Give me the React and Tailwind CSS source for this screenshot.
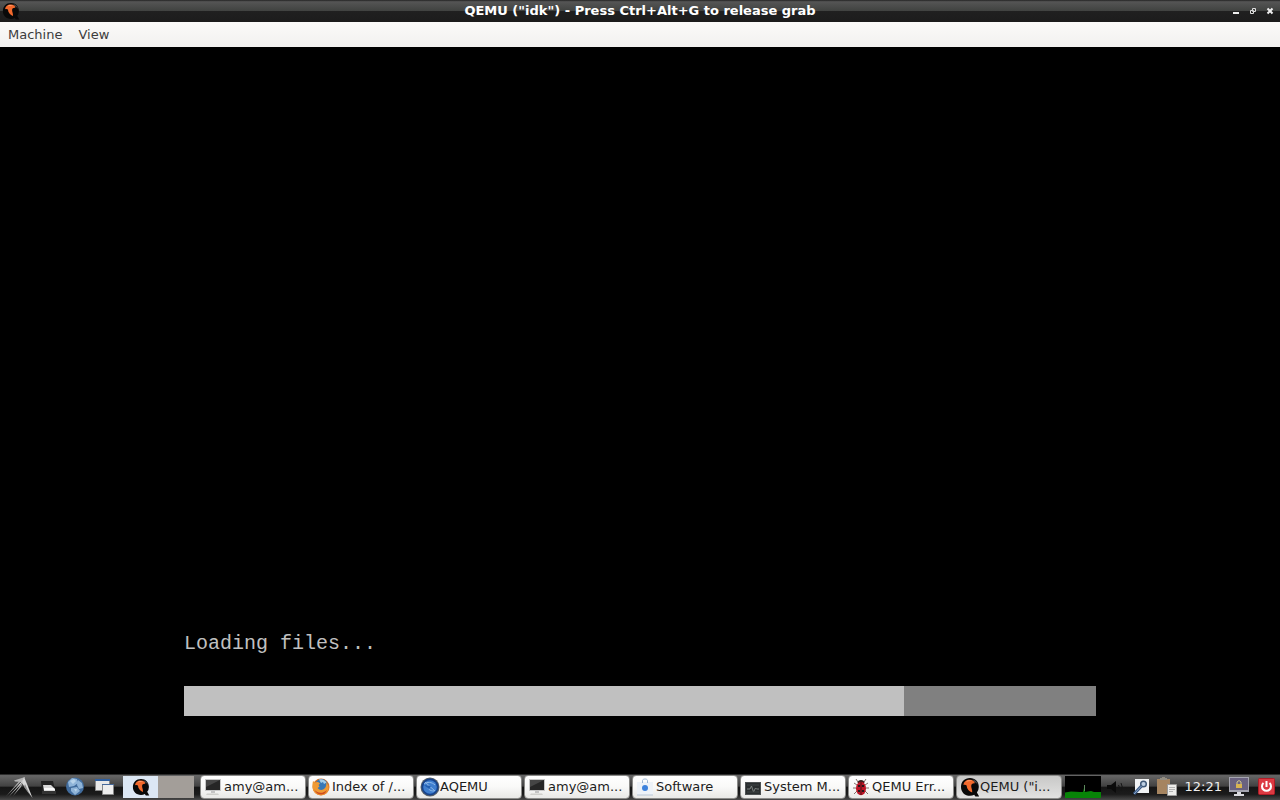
import React from "react";

function QemuIcon({ className }) {
  return (
    <svg viewBox="0 0 20 20" className={className} aria-hidden="true">
      <path d="M10 1C4.600 1 1 4.700 1 10s3.800 8.800 9 8.800c1.600 0 3-.3 4.200-1l1.200 1.700h3.800l-2.300-4.100A9 9 0 0 0 18.800 10C18.800 4.700 15.200 1 10 1z" fill="#090909" />
      <path d="M12.500 2.300c3 .7 4.800 3 5.200 5.600-1-1.700-2-2.500-3.300-2.900z" fill="#4c4c4c" />
      <path d="M3.500 8C3.600 4.600 6.600 2.500 10 2.700c3 .2 4.800 1.600 4.800 3.700-2.200-.2-3.500.6-3.600 2.600 0 2.300 1.300 3.800 1 6.500-3-1.100-5.400-3.700-5.600-7.100C5.700 7.600 4.700 7.400 3.500 8z" fill="#f2692c" />
      <path d="M6 4.800c1.800-1.700 4.600-1.900 6.500-.6-2-.2-4-.1-6.500.6z" fill="#ffa071" />
    </svg>
  );
}

function TerminalIcon() {
  return (
    <svg viewBox="0 0 18 18" className="size-[18px] shrink-0" aria-hidden="true">
      <rect x="1" y="1" width="16" height="12" fill="#c8c8c8" />
      <rect x="2" y="2" width="14" height="10" fill="#262626" />
      <path d="M2 2h14L2 9z" fill="#454545" />
      <path d="M7 13h4v2H7z" fill="#c4c4c4" />
      <path d="M3 15.500h11l1 1.500H2z" fill="#cfcfcb" />
    </svg>
  );
}

function FirefoxIcon() {
  return (
    <svg viewBox="0 0 18 18" className="size-[18px] shrink-0" aria-hidden="true">
      <circle cx="9" cy="9" r="8.500" fill="#de7424" />
      <circle cx="9.500" cy="7.500" r="6.500" fill="#3878b6" />
      <path d="M7 1.500c3-1 6 .3 7.500 3L12 6l-1-2-2 1z" fill="#a6cee8" />
      <path d="M1 3l2 1.500C5 3.500 7 4 8 5.500L6.500 7l1 1.500L5.700 10c1.500 2.500 5 2.500 7 .3 1.500-1.500 1.800-4 1.300-6 2.300 2 3.600 5.500 1.800 9-3 5-10.300 5.600-14 0C.2 10.500.2 6 1 3z" fill="#ef9a34" />
      <path d="M2 11c3 4.800 9 5 13 1-2 6-10 6.500-13-1z" fill="#cf4c20" />
    </svg>
  );
}

function AqemuIcon() {
  return (
    <svg viewBox="0 0 20 20" className="size-5 shrink-0" aria-hidden="true">
      <circle cx="10" cy="10" r="9.500" fill="#56606a" />
      <circle cx="10" cy="10" r="8.500" fill="#16438d" />
      <circle cx="10" cy="10" r="6.800" fill="#3f7fcf" />
      <path d="M4 7c3-2.500 8-2 11 1M5 5l10 9M8 8c-1 4 2 6 6 6" fill="none" stroke="#8fb9e8" strokeWidth="1" />
      <path d="M4 8l7 1-2 3z" fill="#225eb0" />
    </svg>
  );
}

function SoftwareIcon() {
  return (
    <svg viewBox="0 0 18 18" className="size-[18px] shrink-0" aria-hidden="true">
      <path d="M1 4h16v13H1z" fill="#edf2f8" />
      <path d="M1 17h16" stroke="#b8c6d5" />
      <path d="M6.500 5V2.500c0-2 5-2 5 0V5" fill="none" stroke="#9db7d4" />
      <circle cx="9" cy="10" r="3" fill="#3d82dc" />
    </svg>
  );
}

function MonitorIcon() {
  return (
    <svg viewBox="0 0 18 18" className="size-[18px] shrink-0" aria-hidden="true">
      <rect x="1.500" y="4.500" width="15" height="12" fill="#292d2e" stroke="#4d5152" />
      <path d="M3 11h3l1.500-3 2 6 2-4 1 1H15" fill="none" stroke="#7d8381" />
      <path d="M3 7h12M3 14h12" stroke="#3f4545" />
    </svg>
  );
}

function BugIcon() {
  return (
    <svg viewBox="0 0 18 18" className="size-[18px] shrink-0" aria-hidden="true">
      <path d="M6 4L4 1M12 4l2-3M5 7L2 5M13 7l3-2M4 10H1M14 10h3M5 13l-3 3M13 13l3 3" stroke="#80706a" />
      <path d="M5.500 5c0-4 7-4 7 0z" fill="#38201e" />
      <ellipse cx="9" cy="10.500" rx="5" ry="6.700" fill="#bd1526" />
      <path d="M9 4v13" stroke="#4d1015" />
      <path d="M6 7h2v2H6zM10 7h2v2h-2zM6 12h2v2H6zM10 12h2v2h-2z" fill="#25171a" />
    </svg>
  );
}

const tasks = [
  { label: "amy@am...", icon: <TerminalIcon /> },
  { label: "Index of /...", icon: <FirefoxIcon /> },
  { label: "AQEMU", icon: <AqemuIcon />, wide: true },
  { label: "amy@am...", icon: <TerminalIcon /> },
  { label: "Software", icon: <SoftwareIcon /> },
  { label: "System M...", icon: <MonitorIcon /> },
  { label: "QEMU Err...", icon: <BugIcon /> },
  { label: "QEMU (\"i...", icon: <QemuIcon className="size-5 shrink-0" />, wide: true, active: true },
];

function Task({ label, icon, wide, active }) {
  return (
    <button
      type="button"
      aria-pressed={!!active}
      className={
        "flex h-6 max-w-[106px] min-w-0 flex-1 items-center overflow-hidden rounded-[4px] border border-[#8b8b89] pl-[3px] text-left text-[13px] whitespace-nowrap text-[#1c1c1c] " +
        (wide ? "gap-0 " : "gap-[2px] ") +
        (active
          ? "bg-linear-to-b from-[#c8c8c7] to-[#e2e2e1]"
          : "bg-linear-to-b from-white via-[#f9f9f8] to-[#e8e8e6]")
      }
    >
      {icon}
      <span>{label}</span>
    </button>
  );
}

function Launchers() {
  return (
    <nav aria-label="Launchers" className="flex shrink-0 items-center gap-2 pl-[5px]">
      <button type="button" aria-label="Menu" className="h-6 w-7">
        <svg viewBox="0 0 28 24" className="h-6 w-7">
          <path d="M9 5.500L20 2l-2.500 5L10 6.500z" fill="#b5b5b5" />
          <path d="M19 3L1 21.500 13.500 7z" fill="#bcbcbc" />
          <path d="M19 4L3.500 22 16 9z" fill="#f0f0f0" />
          <path d="M18.500 6L8 21l8-9z" fill="#a8a8a8" />
          <path d="M19 2l3 7 5.500 14L21 14l-4-6z" fill="#d9d9d9" />
          <path d="M20 9l5 11-6-8z" fill="#8c8c8c" />
        </svg>
      </button>
      <button type="button" aria-label="Files" className="h-6 w-4">
        <svg viewBox="0 0 16 24" className="h-6 w-4">
          <path d="M0 6h12l3 13H1z" fill="#222" />
          <path d="M2 10h8l4 4v2H3z" fill="#d8d8d8" />
          <path d="M3 13h10l1 2H3z" fill="#fafafa" />
          <path d="M1 16h14v3H1z" fill="#333" />
        </svg>
      </button>
      <button type="button" aria-label="Web browser" className="h-6 w-5">
        <svg viewBox="0 0 20 24" className="h-6 w-5">
          <circle cx="10" cy="11.500" r="9" fill="#416c9d" />
          <path d="M3 7l4-4 5 1 1 4-4 3-5 1zM13 5l4 3 1 5-4 1-2-4zM6 13l6-1 3 4-5 4-4-4z" fill="#8fb4d8" />
          <path d="M5 6l4-2 2 2-3 3zM9 14l3 0-1 3z" fill="#b8d3ea" />
        </svg>
      </button>
      <button type="button" aria-label="Show desktop" className="h-6 w-6">
        <svg viewBox="0 0 24 24" className="h-6 w-6">
          <path d="M2.500 4.500h14v11h-14z" fill="#e8e8e8" stroke="#888" />
          <path d="M2 4h15v2H2z" fill="#2f5e9d" />
          <path d="M9.500 9.500h11v10h-11z" fill="#eee" stroke="#888" />
          <path d="M9 9h12v1H9z" fill="#45699b" />
        </svg>
      </button>
    </nav>
  );
}

function Tray() {
  return (
    <div className="ml-auto flex shrink-0 items-center pr-[5px]">
      <svg viewBox="0 0 36 22" className="mr-[5px] h-[22px] w-9" role="img" aria-label="CPU usage">
        <path d="M0 0h36v22H0z" fill="#000" />
        <path d="M0 16.500l6-1 9 .5h3l1-4 1 4 6-1 3 1h7V22H0z" fill="#078407" />
        <path d="M19.500 9v6" stroke="#5d8a5d" />
      </svg>
      <button type="button" aria-label="Volume" className="mr-2 h-6 w-[18px]">
        <svg viewBox="0 0 18 24" className="h-6 w-[18px]">
          <path d="M1 10h4l5-4v12l-5-4H1z" fill="#0b0b0b" />
          <path d="M12.500 10q1.500 2 0 4M15 8q2.500 4 0 8" fill="none" stroke="#151515" />
        </svg>
      </button>
      <button type="button" aria-label="Search" className="mr-[6px] h-6 w-[18px]">
        <svg viewBox="0 0 18 24" className="h-6 w-[18px]">
          <path d="M3 4h14v14H3z" fill="#f1f3f5" />
          <circle cx="11.500" cy="9" r="2.800" fill="#bed0e4" stroke="#415a79" strokeWidth="1.500" />
          <path d="M9.500 11L2 19" stroke="#395985" strokeWidth="3" />
          <path d="M9.500 11L2 19" stroke="#91abcb" />
        </svg>
      </button>
      <button type="button" aria-label="Clipboard" className="mr-[7px] h-6 w-[22px]">
        <svg viewBox="0 0 22 24" className="h-6 w-[22px]">
          <path d="M1 4h13v15H1z" fill="#a58460" />
          <path d="M4 5V3h2V2h3v1h2v2z" fill="#938d81" />
          <path d="M11.500 9.500h9v11h-9z" fill="#ececea" stroke="#999" />
          <path d="M13 12.500h6M13 14.500h6M13 16.500h4" stroke="#b2b2b2" />
        </svg>
      </button>
      <time className="mr-[7px] text-[13px] text-[#eee]">12:21</time>
      <button type="button" aria-label="Lock screen" className="mr-2 h-6 w-5">
        <svg viewBox="0 0 20 24" className="h-6 w-5">
          <path d="M0 2h20v15H0z" fill="#a5a5b0" />
          <path d="M1 3h18v12H1z" fill="#6a6280" />
          <path d="M8 9V7q2-3 4 0v2" fill="none" stroke="#d4c98d" />
          <path d="M7 9h6v4H7z" fill="#d9b551" />
          <path d="M8 17h4v2h3v2H5v-2h3z" fill="#d9d9dd" />
        </svg>
      </button>
      <button type="button" aria-label="Shut down" className="h-6 w-[18px]">
        <svg viewBox="0 0 18 24" className="h-6 w-[18px]">
          <rect x="1.500" y="3.500" width="16" height="16" rx="1" fill="#dc3a42" stroke="#b11c26" />
          <path d="M6.500 8a4.500 4.500 0 1 0 6 0M9.500 6v6" fill="none" stroke="#fff" strokeWidth="2" />
        </svg>
      </button>
    </div>
  );
}

export default function App() {
  return (
    <div className="flex min-h-screen flex-col bg-black font-['DejaVu_Sans',sans-serif]">
      <header className="grid h-[22px] shrink-0 grid-cols-[48px_1fr_48px] items-center bg-[linear-gradient(#222_0%,#555_8%,#414341_48%,#202020_52%,#1c1c1c_100%)]">
        <QemuIcon className="ml-[2px] size-[18px]" />
        <h1 className="-mt-px text-center text-[13px] leading-5 font-bold text-white">
          QEMU ("idk") - Press Ctrl+Alt+G to release grab
        </h1>
        <div className="flex items-center justify-end gap-[7px] pr-[5px]">
          <button type="button" aria-label="Minimize">
            <svg viewBox="0 0 10 10" className="size-[10px]"><path d="M2 6h6v2H2z" fill="#eee" /></svg>
          </button>
          <button type="button" aria-label="Restore">
            <svg viewBox="0 0 10 10" className="size-[10px]">
              <path d="M4.500 2.500h3v3h-3zM2.500 4.500h3v3h-3z" fill="none" stroke="#ddd" />
            </svg>
          </button>
          <button type="button" aria-label="Close">
            <svg viewBox="0 0 10 10" className="size-[10px]"><path d="M2.500 2.500l5 5M7.500 2.500l-5 5" stroke="#eee" strokeWidth="2" /></svg>
          </button>
        </div>
      </header>

      <nav aria-label="Menu bar" className="flex h-[25px] shrink-0 items-center gap-4 bg-linear-to-b from-[#fbfaf9] to-[#f2f1ef] px-2 text-[13px] text-[#3c3c3c]">
        <button type="button">Machine</button>
        <button type="button">View</button>
      </nav>

      <main className="flex flex-1 flex-col justify-end bg-black px-[14.375%] pb-[58px]">
        <p id="loading" className="mb-[30px] font-['Liberation_Mono',monospace] text-[20px] leading-6 text-[#c0c0c0]">Loading files...</p>
        <div
          role="progressbar"
          aria-labelledby="loading"
          aria-valuenow={79}
          aria-valuemin={0}
          aria-valuemax={100}
          className="h-[30px] bg-[#808080]"
        >
          <div className="h-full bg-[#c0c0c0]" style={{ width: `${(720 / 912) * 100}%` }} />
        </div>
      </main>

      <footer className="flex h-[26px] shrink-0 items-center bg-[linear-gradient(#111_0%,#666_6%,#424242_46%,#151515_52%,#1b1b1b_78%,#4a4a4a_100%)]">
        <Launchers />
        <div className="ml-[6px] flex h-[22px] shrink-0">
          <button type="button" aria-label="Desktop 1" className="flex w-[35px] items-center justify-center bg-[#dce7f4]">
            <QemuIcon className="size-[18px]" />
          </button>
          <button type="button" aria-label="Desktop 2" className="w-9 bg-[#a39e99]" />
        </div>
        <div className="ml-[6px] flex min-w-0 flex-1 gap-[2px]">
          {tasks.map((task, i) => (
            <Task key={i} {...task} />
          ))}
        </div>
        <Tray />
      </footer>
    </div>
  );
}
